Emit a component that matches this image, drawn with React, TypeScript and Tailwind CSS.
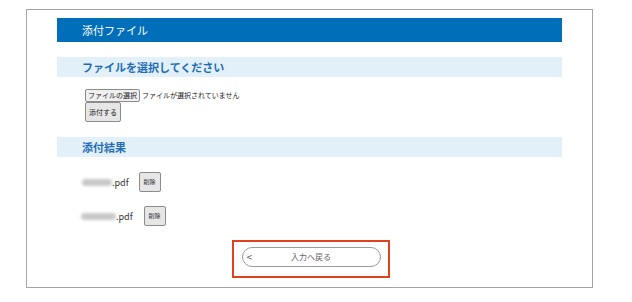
import React from 'react';

const font = { fontFamily: '"Noto Sans CJK JP", "Noto Sans", sans-serif' };

const files = [
  { blur: 'w-[30px]', gap: 'ml-[10px]' },
  { blur: 'w-[35px]', gap: 'ml-[11px]' },
];

const SectionHeader = ({ children }: { children: React.ReactNode }) => (
  <div className="h-[20px] w-[505px] bg-[#e2f0fa] pl-[25px] flex items-center">
    <span className="text-[11px] font-bold text-[#1f6cb5] leading-none">{children}</span>
  </div>
);

const App = () => {
  return (
    <div className="w-[632px] h-[302px] bg-white pt-[9px] pl-[26px]" style={font}>
      <div className="w-[567px] h-[279px] border-[1.5px] border-[#a3a3a3] pl-[30px] pt-[8px]">
        <div className="h-[24px] w-[505px] bg-[#006eb9] pl-[25px] flex items-center">
          <span className="text-[11px] text-white leading-none">添付ファイル</span>
        </div>

        <div className="mt-[15px]">
          <SectionHeader>ファイルを選択してください</SectionHeader>
        </div>

        <div className="pl-[28px] mt-[12px] flex flex-col items-start">
          <div className="flex items-center h-[13px]">
            <span className="h-[13px] px-[2px] border border-[#8c8c8c] rounded-[2px] bg-[#efefef] text-[7px] text-[#222] leading-none flex items-center">
              ファイルの選択
            </span>
            <span className="ml-[2px] text-[7px] text-[#222] leading-none">ファイルが選択されていません</span>
          </div>
          <span className="flex items-center h-[20px] px-[3px] border border-[#8c8c8c] rounded-[2px] bg-[#e6e6e6] text-[7px] text-[#222] leading-none">
            添付する
          </span>
        </div>

        <div className="mt-[15px]">
          <SectionHeader>添付結果</SectionHeader>
        </div>

        <div className="pl-[25px] mt-[15px] flex flex-col gap-[14px]">
          {files.map((f, i) => (
            <div key={i} className={`flex items-center h-[20px] ${i === 1 ? '-ml-[1px]' : ''}`}>
              <span className={`${f.blur} h-[7px] rounded-full bg-[#c8c8c8] blur-[1.5px]`} />
              <span className="text-[9px] text-[#333] leading-none">.pdf</span>
              <span className={`${f.gap} h-[20px] w-[22px] border border-[#8c8c8c] rounded-[2px] bg-[#e6e6e6] text-[6px] text-[#333] leading-none flex items-center justify-center`}>
                削除
              </span>
            </div>
          ))}
        </div>

        <div className="w-[505px] flex justify-center mt-[14px]">
          <div className="ml-[2px] w-[158px] h-[38px] border-2 border-[#e2401f] pl-[8px] pt-[5px]">
            <div className="relative w-[139px] h-[20px] rounded-full border border-[#9a9a9a] flex items-center justify-center">
              <span className="absolute left-[4px] text-[10px] text-[#555] leading-none">&lt;</span>
              <span className="text-[8px] text-[#666] leading-none">入力へ戻る</span>
            </div>
          </div>
        </div>
      </div>
    </div>
  );
};

export default App;
